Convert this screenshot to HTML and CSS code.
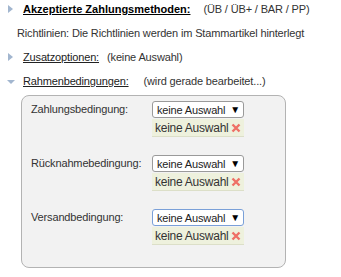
FILE: index.html
```html
<!DOCTYPE html>
<html lang="de">
<head>
<meta charset="utf-8">
<link rel="stylesheet" href="styles.css">
</head>
<body>
<div class="page">
  <div class="line">
    <span class="tri tri-right"></span>
    <span class="title title-bold">Akzeptierte Zahlungsmethoden:</span>
    <span class="val val-bold">(ÜB / ÜB+ / BAR / PP)</span>
  </div>
  <div class="line note">Richtlinien: Die Richtlinien werden im Stammartikel hinterlegt</div>
  <div class="line">
    <span class="tri tri-right"></span>
    <span class="title">Zusatzoptionen:</span>
    <span class="val">(keine Auswahl)</span>
  </div>
  <div class="line line-last">
    <span class="tri tri-down"></span>
    <span class="title">Rahmenbedingungen:</span>
    <span class="val val-wide">(wird gerade bearbeitet...)</span>
  </div>
  <div class="box">
    <div class="field">
      <div class="label">Zahlungsbedingung:</div>
      <div class="ctrl">
        <div class="select"><span>keine Auswahl</span><span class="arrow">▼</span></div>
        <div class="chip"><span>keine Auswahl</span><svg class="x" viewBox="0 0 10 10" width="10" height="10"><path d="M1.5 1.5 L8.5 8.5 M8.5 1.5 L1.5 8.5"/></svg></div>
      </div>
    </div>
    <div class="field">
      <div class="label">Rücknahmebedingung:</div>
      <div class="ctrl">
        <div class="select"><span>keine Auswahl</span><span class="arrow">▼</span></div>
        <div class="chip"><span>keine Auswahl</span><svg class="x" viewBox="0 0 10 10" width="10" height="10"><path d="M1.5 1.5 L8.5 8.5 M8.5 1.5 L1.5 8.5"/></svg></div>
      </div>
    </div>
    <div class="field">
      <div class="label">Versandbedingung:</div>
      <div class="ctrl">
        <div class="select select-focus"><span>keine Auswahl</span><span class="arrow">▼</span></div>
        <div class="chip"><span>keine Auswahl</span><svg class="x" viewBox="0 0 10 10" width="10" height="10"><path d="M1.5 1.5 L8.5 8.5 M8.5 1.5 L1.5 8.5"/></svg></div>
      </div>
    </div>
  </div>
</div>
</body>
</html>
```
FILE: styles.css
```css
html, body {
  margin: 0;
  padding: 0;
  background: #fff;
}
body {
  font-family: "Liberation Sans", Arial, sans-serif;
  font-size: 11px;
  letter-spacing: -0.15px;
  color: #333;
}
.page {
  padding: 2px 0 0 6px;
}
.line {
  display: flex;
  align-items: center;
  height: 14px;
  line-height: 14px;
  margin-bottom: 10px;
  white-space: nowrap;
}
.line-last {
  margin-bottom: 7px;
}
.note {
  padding-left: 11px;
}
.tri {
  width: 0;
  height: 0;
  flex: none;
}
.tri-right {
  margin: 0 10px 0 2px;
  border-top: 4px solid transparent;
  border-bottom: 4px solid transparent;
  border-left: 5px solid #a2b6cf;
}
.tri-down {
  margin: 2px 8px 0 1px;
  border-left: 4px solid transparent;
  border-right: 4px solid transparent;
  border-top: 4px solid #a2b6cf;
}
.title {
  text-decoration: underline;
  color: #222;
}
.title-bold {
  font-weight: bold;
  color: #000;
  letter-spacing: 0;
}
.val {
  margin-left: 8px;
}
.val-bold {
  margin-left: 13px;
}
.val-wide {
  margin-left: 15px;
}
.box {
  width: 263px;
  height: 166px;
  margin-left: 15px;
  border: 1px solid #b3b3b3;
  border-radius: 8px;
  background: #f2f2f2;
  padding-top: 5px;
  box-sizing: content-box;
}
.field {
  display: flex;
  margin-bottom: 18px;
}
.label {
  width: 121px;
  padding-left: 9px;
  padding-top: 1px;
  line-height: 14px;
  flex: none;
  white-space: nowrap;
}
.ctrl {
  width: 92px;
}
.select {
  height: 15px;
  border: 1px solid #9a9a9a;
  border-radius: 3px;
  background: #fff;
  display: flex;
  justify-content: space-between;
  align-items: center;
  padding: 0 3px 0 4px;
  font-size: 11px;
  color: #222;
  white-space: nowrap;
}
.select-focus {
  border-color: #7aa0d8;
}
.arrow {
  font-size: 10px;
  color: #000;
}
.chip {
  margin-top: 1px;
  height: 17px;
  background: #eef1dd;
  border-bottom: 1px solid #dcdfc8;
  display: flex;
  align-items: center;
  justify-content: space-between;
  padding: 0 3px 0 3px;
  font-size: 12px;
  letter-spacing: -0.25px;
  color: #333;
  white-space: nowrap;
}
.x {
  stroke: #ee7066;
  stroke-width: 2.4;
  fill: none;
  flex: none;
}
```
